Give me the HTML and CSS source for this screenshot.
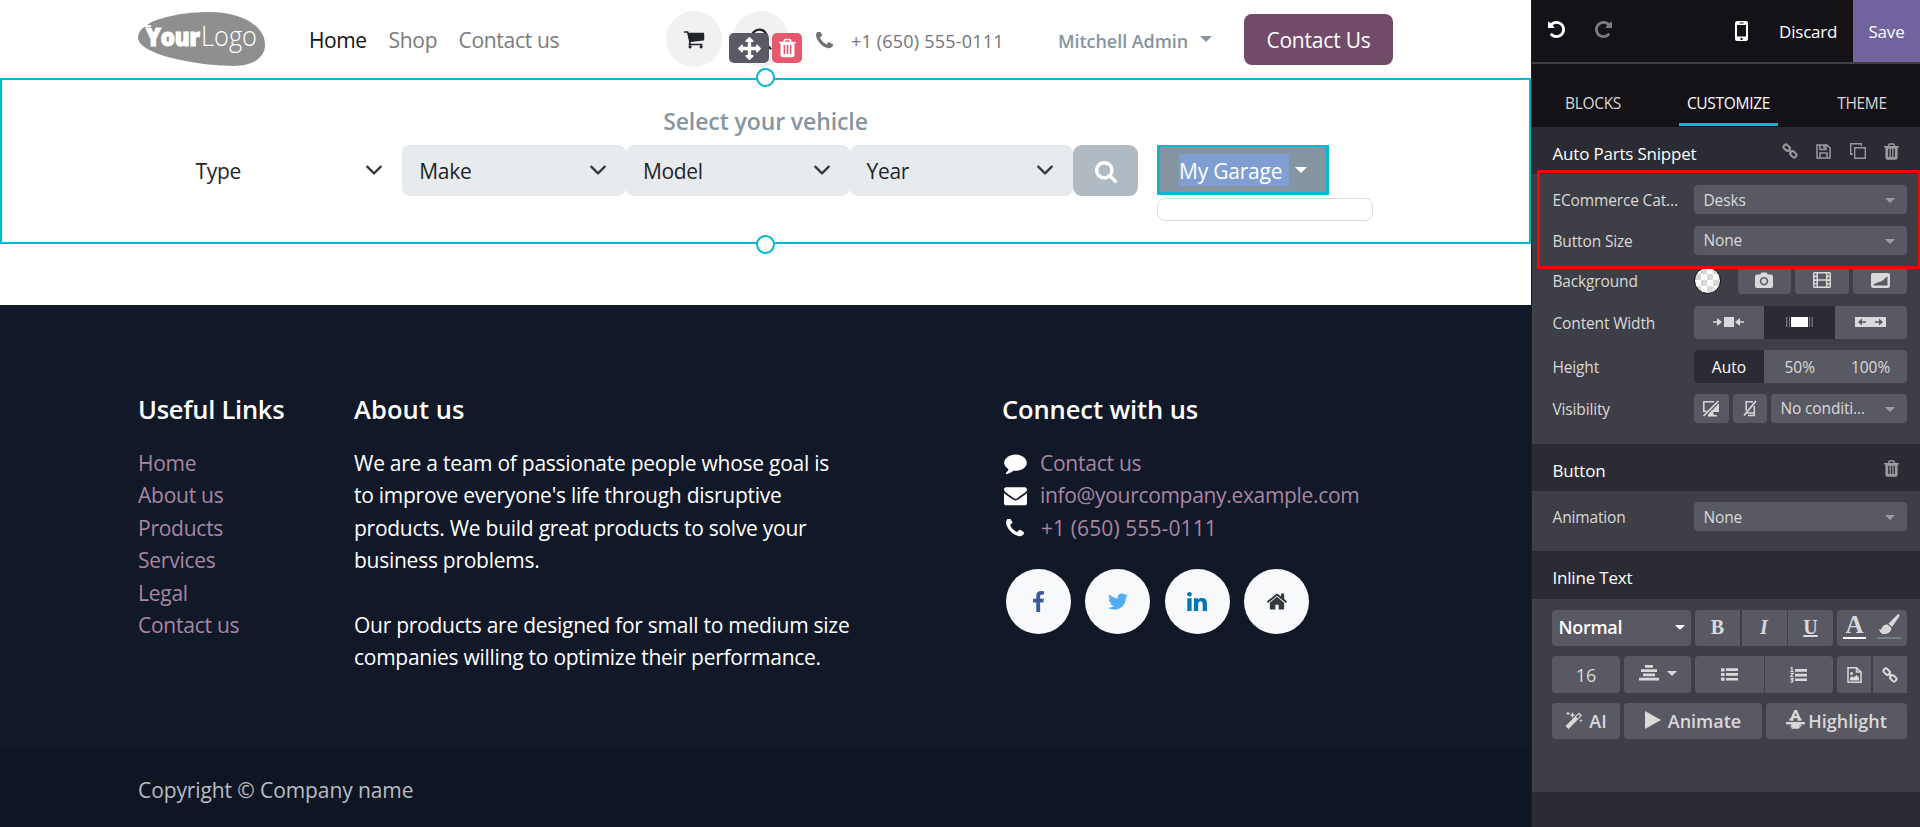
FILE: index.html
```
<!DOCTYPE html>
<html lang="en">
<head>
<meta charset="utf-8">
<title>Website editor</title>
<link rel="stylesheet" href="styles.css">
</head>
<body>
<svg class="defs" width="0" height="0">
  <symbol id="cart" viewBox="0 0 1792 1792"><path d="M704 1536q0 52-38 90t-90 38-90-38-38-90 38-90 90-38 90 38 38 90zm896 0q0 52-38 90t-90 38-90-38-38-90 38-90 90-38 90 38 38 90zm128-1088v512q0 24-16.5 42.5t-40.5 21.5l-1044 122q13 60 13 70 0 16-24 64h920q26 0 45 19t19 45-19 45-45 19h-1024q-26 0-45-19t-19-45q0-11 8-31.5t16-36 21.5-40 15.5-29.5l-177-823h-204q-26 0-45-19t-19-45 19-45 45-19h256q16 0 28.5 6.5t19.5 15.5 13 24.5 8 26 5.5 29.5 4.5 26h1201q26 0 45 19t19 45z"/></symbol>
  <symbol id="phone" viewBox="192 256 1408 1408"><path transform="translate(0 64)" d="M1600 1240q0 27-10 70.5t-21 68.5q-21 50-122 106-94 51-186 51-27 0-53-3.5t-57.5-12.5-47-14.5-55.5-20.5-49-18q-98-35-175-83-127-79-264-216t-216-264q-48-77-83-175-3-9-18-49t-20.5-55.5-14.5-47-12.5-57.5-3.5-53q0-92 51-186 56-101 106-122 25-11 68.5-21t70.5-10q14 0 21 3 18 6 53 76 11 19 30 54t35 63.5 31 53.5q3 4 17.5 25t21.5 35.5 7 28.5q0 20-28.5 50t-62 55-62 53-28.5 46q0 9 5 22.5t8.5 20.5 14 24 11.5 19q76 137 174 235t235 174q2 1 19 11.5t24 14 20.5 8.5 22.5 5q18 0 46-28.5t53-62 55-62 50-28.5q14 0 28.5 7t35.5 21.5 25 17.5q25 15 53.5 31t63.5 35 54 30q70 35 76 53 3 7 3 21z"/></symbol>
  <symbol id="search" viewBox="64 128 1664 1664"><path d="M1216 832q0-185-131.5-316.5t-316.5-131.5-316.5 131.5-131.5 316.5 131.5 316.5 316.5 131.5 316.5-131.5 131.5-316.5zm512 832q0 52-38 90t-90 38q-54 0-90-38l-343-342q-179 124-399 124-143 0-273.5-55.5t-225-150-150-225-55.5-273.5 55.5-273.5 150-225 225-150 273.5-55.5 273.5 55.5 225 150 150 225 55.5 273.5q0 220-124 399l343 343q37 37 37 90z"/></symbol>
  <symbol id="trash" viewBox="192 128 1408 1536"><path fill-rule="evenodd" d="M704 1376v-704q0-14-9-23t-23-9h-64q-14 0-23 9t-9 23v704q0 14 9 23t23 9h64q14 0 23-9t9-23zm256 0v-704q0-14-9-23t-23-9h-64q-14 0-23 9t-9 23v704q0 14 9 23t23 9h64q14 0 23-9t9-23zm256 0v-704q0-14-9-23t-23-9h-64q-14 0-23 9t-9 23v704q0 14 9 23t23 9h64q14 0 23-9t9-23zm-544-992h448l-48-117q-7-9-17-11h-317q-10 2-17 11zm928 32v64q0 14-9 23t-23 9h-96v948q0 83-47 143.5t-113 60.5h-832q-66 0-113-58.5t-47-141.5v-952h-96q-14 0-23-9t-9-23v-64q0-14 9-23t23-9h309l70-167q15-37 54-63t79-26h320q40 0 79 26t54 63l70 167h309q14 0 23 9t9 23z"/></symbol>
  <symbol id="move" viewBox="0 0 1792 1792"><path d="M1792 896q0 26-19 45l-256 256q-19 19-45 19t-45-19-19-45v-128h-384v384h128q26 0 45 19t19 45-19 45l-256 256q-19 19-45 19t-45-19l-256-256q-19-19-19-45t19-45 45-19h128v-384h-384v128q0 26-19 45t-45 19-45-19l-256-256q-19-19-19-45t19-45l256-256q19-19 45-19t45 19 19 45v128h384v-384h-128q-26 0-45-19t-19-45 19-45l256-256q19-19 45-19t45 19l256 256q19 19 19 45t-19 45-45 19h-128v384h384v-128q0-26 19-45t45-19 45 19l256 256q19 19 19 45z"/></symbol>
  <symbol id="undo" viewBox="128 128 1536 1536"><path d="M1664 896q0 156-61 298t-164 245-245 164-298 61q-172 0-327-72.5t-264-204.5q-7-10-6.5-22.5t8.5-20.5l137-138q10-9 25-9 16 2 23 12 73 95 179 147t225 52q104 0 198.5-40.5t163.5-109.5 109.5-163.5 40.5-198.5-40.5-198.5-109.5-163.5-163.5-109.5-198.5-40.5q-98 0-188 35.5t-160 101.5l137 138q31 30 14 69-17 40-59 40h-448q-26 0-45-19t-19-45v-448q0-42 40-59 39-17 69 14l130 129q107-101 244.5-156.5t284.5-55.5q156 0 298 61t245 164 164 245 61 298z"/></symbol>
  <symbol id="comment" viewBox="0 128 1792 1664"><path d="M1792 896q0 174-120 321.5t-326 233-450 85.5q-70 0-145-8-198 175-460 242-49 14-114 22-17 2-30.5-9t-17.5-29v-1q-3-4-.5-12t2-10 4.5-9.5l6-9 7-8.5 8-9q7-8 31-34.5t34.5-38 31-39.5 32.5-51 27-59 26-76q-157-89-247.5-220t-90.5-281q0-130 71-248.5t191-204.5 286-136.5 348-50.5q244 0 450 85.5t326 233 120 321.5z"/></symbol>
  <symbol id="envelope" viewBox="0 0 1792 1792"><path d="M1792 710v794q0 66-47 113t-113 47h-1472q-66 0-113-47t-47-113v-794q44 49 101 87 362 246 497 345 57 42 92.5 65.5t94.5 48 110 24.5h2q51 0 110-24.5t94.5-48 92.5-65.5q170-123 498-345 57-39 100-87zm0-294q0 79-49 151t-122 123q-376 261-468 325-10 7-42.5 31t-54 38-52 32.5-57.5 27-50 9h-2q-23 0-50-9t-57.5-27-52-32.5-54-38-42.5-31q-91-64-262-182.5t-205-142.5q-62-42-117-115.5t-55-136.5q0-78 41.5-130t118.5-52h1472q65 0 112.5 47t47.5 113z"/></symbol>
  <symbol id="facebook" viewBox="479 0 864 1664"><path d="M1343 12v264h-157q-86 0-116 36t-30 108v189h293l-39 296h-254v759h-306v-759h-255v-296h255v-218q0-186 104-288.5t277-102.5q147 0 228 12z"/></symbol>
  <symbol id="twitter" viewBox="108 256 1576 1280"><path d="M1684 408q-67 98-162 167 1 14 1 42 0 130-38 259.5t-115.5 248.5-184.5 210.5-258 146-323 54.5q-271 0-496-145 35 4 78 4 225 0 401-138-105-2-188-64.5t-114-159.5q33 5 61 5 43 0 85-11-112-23-185.5-111.5t-73.5-205.5v-4q68 38 146 41-66-44-105-115t-39-154q0-88 44-163 121 149 294.5 238.5t371.5 99.5q-8-38-8-74 0-134 94.5-228.5t228.5-94.5q140 0 236 102 109-21 205-78-37 115-142 178 93-10 186-50z"/></symbol>
  <symbol id="linkedin" viewBox="128 148 1536 1468"><path d="M477 625v991h-330v-991h330zm21-306q1 73-50.5 122t-135.5 49h-2q-82 0-132-49t-50-122q0-74 51.5-122.5t134.5-48.5 133 48.5 51 122.5zm1166 729v568h-329v-530q0-105-40.5-164.5t-126.5-59.5q-63 0-105.5 34.5t-63.5 85.5q-11 30-11 81v553h-329q2-399 2-647t-1-296l-1-48h329v144h-2q20-32 41-56t56.5-52 87-43.5 114.5-15.5q171 0 275 113.5t104 332.5z"/></symbol>
  <symbol id="home" viewBox="90 250 1612 1286"><path d="M1472 992v480q0 26-19 45t-45 19h-384v-384h-256v384h-384q-26 0-45-19t-19-45v-480q0-1 .5-3t.5-3l575-474 575 474q1 2 1 6zm223-69l-62 74q-8 9-21 11h-3q-13 0-21-7l-692-577-692 577q-12 8-24 7-13-2-21-11l-62-74q-8-10-7-23.5t11-21.5l719-599q32-26 76-26t76 26l244 204v-195q0-14 9-23t23-9h192q14 0 23 9t9 23v408l219 182q10 8 11 21.5t-7 23.5z"/></symbol>
  <symbol id="chain" viewBox="0 0 16 16"><g fill="none" stroke="currentColor" stroke-width="2"><rect x="-3.4" y="-2.3" width="6.8" height="4.6" rx="2.1" transform="translate(4.7 4.7) rotate(45)"/><rect x="-3.4" y="-2.3" width="6.8" height="4.6" rx="2.1" transform="translate(11.3 11.3) rotate(45)"/><path d="M6.2 6.2l3.6 3.6"/></g></symbol>
  <symbol id="floppy" viewBox="0 0 15 15"><path fill="none" stroke="currentColor" stroke-width="1.500" d="M1 1h10l3 3v10H1zM4 14V9h7v5M4 1v4.500h6V1"/><path d="M7.200 1.500h2v3h-2z"/></symbol>
  <symbol id="clone" viewBox="0 0 16 16"><path fill="none" stroke="currentColor" stroke-width="1.400" d="M4.700 4.700h10.600v10.600H4.700zM3 11.300H.7V.7h10.600V3"/></symbol>
  <symbol id="chev" viewBox="0 0 16 16"><path fill="none" stroke="#343a40" stroke-width="2" stroke-linecap="round" stroke-linejoin="round" d="m2 5 6 6 6-6"/></symbol>
</svg>
<div class="app">
<main class="site">
  <header class="header">
    <svg class="logo" viewBox="0 0 127 54">
      <path fill="#8f8f8f" d="M0 25C1 8 40 0 72 0c30 0 55 13 55 33 0 13-13 21-31 21C60 54-1 43 0 25z"/>
      <path fill="#fff" d="M5 13h8v2H5z"/>
      <text class="logo-bold" x="8" y="33.500" textLength="54" lengthAdjust="spacingAndGlyphs">Your</text>
      <text class="logo-light" x="63" y="33.500" textLength="56" lengthAdjust="spacingAndGlyphs">Logo</text>
    </svg>
    <nav class="nav"><a class="nav-home">Home</a><a class="nav-shop">Shop</a><a class="nav-contact">Contact us</a></nav>
    <span class="round"><svg width="22" height="22"><use href="#cart"/></svg></span>
    <span class="round round-search"><svg width="22" height="22" viewBox="0 0 22 22"><path fill="none" stroke="#212529" stroke-width="2.300" stroke-linecap="round" d="M15 15l5.500 5.500M17 9.300a7.700 7.700 0 1 1-15.400 0a7.700 7.700 0 0 1 15.400 0"/></svg></span>
    <svg class="head-phone" width="17" height="17"><use href="#phone"/></svg>
    <span class="head-number">+1 (650) 555-0111</span>
    <span class="user">Mitchell Admin</span><i class="caret user-caret"></i>
    <a class="cta">Contact Us</a>
  </header>
  <section class="vehicle">
    <span class="knob knob-top"></span><span class="knob knob-bottom"></span>
    <div class="overlay-tools">
      <span class="tool-move"><svg width="23" height="23"><use href="#move"/></svg></span>
      <span class="tool-trash"><svg width="17" height="20"><use href="#trash"/></svg></span>
    </div>
    <h4 class="vehicle-title">Select your vehicle</h4>
    <div class="vehicle-form">
      <div class="pick pick-plain">Type<svg width="18" height="18"><use href="#chev"/></svg></div>
      <div class="pick">Make<svg width="18" height="18"><use href="#chev"/></svg></div>
      <div class="pick">Model<svg width="18" height="18"><use href="#chev"/></svg></div>
      <div class="pick">Year<svg width="18" height="18"><use href="#chev"/></svg></div>
      <div class="find"><svg width="22" height="22"><use href="#search"/></svg></div>
      <div class="garage"><div class="garage-btn"><span class="selected">My Garage</span><i class="caret"></i></div><div class="garage-menu"></div></div>
    </div>
  </section>
  <footer class="footer">
    <div class="col-links"><h5>Useful Links</h5>
      <ul><li>Home</li><li>About us</li><li>Products</li><li>Services</li><li>Legal</li><li>Contact us</li></ul></div>
    <div class="col-about"><h5>About us</h5>
      <p>We are a team of passionate people whose goal is<br>to improve everyone's life through disruptive<br>products. We build great products to solve your<br>business problems.</p>
      <p>Our products are designed for small to medium size<br>companies willing to optimize their performance.</p></div>
    <div class="col-connect"><h5>Connect with us</h5>
      <ul class="contacts">
        <li><i><svg width="23" height="21"><use href="#comment"/></svg></i>Contact us</li>
        <li><i><svg width="23" height="23"><use href="#envelope"/></svg></i><span class="mail">info@yourcompany.example.com</span></li>
        <li><i><svg width="18" height="18"><use href="#phone"/></svg></i><span class="tel">+1 (650) 555-0111</span></li>
      </ul>
      <div class="social">
        <span class="fb"><svg width="11" height="21"><use href="#facebook"/></svg></span>
        <span class="tw"><svg width="20" height="17"><use href="#twitter"/></svg></span>
        <span class="li"><svg width="20" height="19"><use href="#linkedin"/></svg></span>
        <span class="ho"><svg width="20" height="17"><use href="#home"/></svg></span>
      </div></div>
  </footer>
  <div class="copyright">Copyright © Company name</div>
</main>
<aside class="panel">
  <div class="topbar">
    <svg class="undo" width="17" height="17"><use href="#undo"/></svg>
    <svg class="redo" width="17" height="17"><use href="#undo"/></svg>
    <svg class="mobile" width="13" height="21" viewBox="0 0 13 21"><path fill="#fff" fill-rule="evenodd" d="M2 0h9a2 2 0 0 1 2 2v16a2 2 0 0 1-2 2H2a2 2 0 0 1-2-2V2a2 2 0 0 1 2-2zM2 4v11.500h9V4zM4.500 1.600v.8h4v-.8zM6.500 16.700a1.200 1.200 0 1 0 .01 0z"/></svg>
    <span class="discard">Discard</span><span class="save">Save</span>
  </div>
  <div class="tabs"><span class="tab tab-blocks">BLOCKS</span><span class="tab tab-custom">CUSTOMIZE</span><span class="tab tab-theme">THEME</span></div>
  <div class="band band-first"><span>Auto Parts Snippet</span><div class="band-icons"><svg width="16" height="16"><use href="#chain"/></svg><svg width="15" height="15"><use href="#floppy"/></svg><svg width="16" height="16"><use href="#clone"/></svg><svg width="15" height="17"><use href="#trash"/></svg></div></div>
  <div class="options">
    <div class="highlight-box"></div>
    <div class="row"><label>ECommerce Cat...</label><div class="sel">Desks<i class="caret"></i></div></div>
    <div class="row"><label>Button Size</label><div class="sel">None<i class="caret"></i></div></div>
    <div class="row row-bg"><label>Background</label><span class="swatch"></span>
      <div class="trio">
      <span class="btn"><svg width="18" height="16" viewBox="0 0 18 16"><path fill-rule="evenodd" d="M2 2.500h3L6.500.5h5l1.500 2h3a2 2 0 0 1 2 2V14a2 2 0 0 1-2 2H2a2 2 0 0 1-2-2V4.500a2 2 0 0 1 2-2zM9 5a4.200 4.200 0 1 0 .01 0zM9 6.500a2.700 2.700 0 1 1-.01 0z"/></svg></span>
      <span class="btn"><svg width="18" height="16" viewBox="0 0 18 16"><path fill-rule="evenodd" d="M1.500 0h15A1.500 1.500 0 0 1 18 1.500v13a1.500 1.500 0 0 1-1.500 1.500h-15A1.500 1.500 0 0 1 0 14.500v-13A1.500 1.500 0 0 1 1.500 0zM1.500 1.500v2h2v-2zm0 3.700v2h2v-2zm0 3.700v2h2v-2zm0 3.600v2h2v-2zM14.500 1.500v2h2v-2zm0 3.700v2h2v-2zm0 3.700v2h2v-2zm0 3.600v2h2v-2zM5 1.500v5.700h8V1.500zM5 8.800v5.700h8V8.800z"/></svg></span>
      <span class="btn"><svg width="19" height="15" viewBox="0 0 19 15"><path fill-rule="evenodd" d="M2 0h15a2 2 0 0 1 2 2v11a2 2 0 0 1-2 2H2a2 2 0 0 1-2-2V2a2 2 0 0 1 2-2zM2.500 12.500h14V3.500C14.500 4 13 7.500 10 8.500c-3 .5-5 1.500-7.500 3z"/></svg></span>
      </div></div>
    <div class="row"><label>Content Width</label><div class="seg">
      <span><svg width="31" height="10" viewBox="0 0 31 10"><path d="M11 0h10v10H11zM0 4.200h4V1l5 4-5 4V5.800H0zM31 4.200h-4V1l-5 4 5 4V5.800h4z"/></svg></span>
      <span class="on"><svg width="27" height="10" viewBox="0 0 27 10"><path fill="#fff" d="M5 0h17v10H5z"/><path fill="#777780" d="M0 0h1.300v10H0zM3 0h1v10H3zM23 0h1v10h-1zM25.500 0h1.300v10h-1.300z"/></svg></span>
      <span><svg width="31" height="10" viewBox="0 0 31 10"><path d="M0 0h31v10H0z"/><path fill="#595964" d="M11 4.300H7V1.500L3 5l4 3.500V5.700h4zM20 4.300h4V1.500L28 5l-4 3.500V5.700h-4z"/></svg></span></div></div>
    <div class="row"><label>Height</label><div class="seg"><span class="on">Auto</span><span>50%</span><span>100%</span></div></div>
    <div class="row row-vis"><label>Visibility</label>
      <span class="btn btn-a"><svg width="18" height="17" viewBox="0 0 18 17"><path fill="none" stroke="#d9d9d9" stroke-width="1.500" d="M12 1.800H1.800v9.400h3M16.200 4v7.200H9"/><path d="M8 12h3l1 3h3v1.500H6V15zM9 11.500L16.500 4v8z"/><path stroke="#d9d9d9" stroke-width="1.700" d="M1.500 16L16.500 1"/></svg></span>
      <span class="btn btn-b"><svg width="14" height="17" viewBox="0 0 14 17"><path fill="none" stroke="#d9d9d9" stroke-width="1.500" d="M10 1.700H3.200v9M11.300 6v9.500H5M4 13h7"/><path stroke="#d9d9d9" stroke-width="1.700" d="M1 15.500L13 1"/></svg></span>
      <div class="sel">No conditi...<i class="caret"></i></div></div>
  </div>
  <div class="band"><span>Button</span><div class="band-icons"><svg width="15" height="17"><use href="#trash"/></svg></div></div>
  <div class="options options-anim"><div class="row"><label>Animation</label><div class="sel">None<i class="caret"></i></div></div></div>
  <div class="band"><span>Inline Text</span></div>
  <div class="editor">
    <div class="line line1">
      <span class="btn normal">Normal<i class="caret"></i></span>
      <div class="biu"><span class="btn">B</span><span class="btn ital">I</span><span class="btn und">U</span></div>
      <span class="btn colors"><b class="fore">A</b><b class="back"><svg width="21" height="20" viewBox="0 0 21 20"><path d="M18.500.500c2-1 2.500.500 1.500 2.500l-7 10-3.600-3.200zM8.500 10.500l3.800 3.400c0 4-3.500 6-7.300 6-3 0-4.500-2.500-5-5 1.500 1 2.500.6 3-.9.700-2.500 3-3.800 5.500-3.500z"/></svg></b></span>
    </div>
    <div class="line line2">
      <span class="btn size">16</span>
      <span class="btn align"><svg width="20" height="16" viewBox="0 0 20 16"><path d="M6 0h8v2.800H6zM2 4.200h16V7H2zM4 8.500h12v2.800H4zM0 12.800h20v2.800H0z"/></svg><i class="caret"></i></span>
      <div class="lists"><span class="btn"><svg width="17" height="13" viewBox="0 0 17 13"><path d="M5 .300H17V3H5zM5 5.100H17v2.700H5zM5 9.900H17v2.700H5zM0 .2h3.600v3.200H0zM0 4.900h3.600v3.200H0zM0 9.600h3.600v3.200H0z"/></svg></span>
      <span class="btn"><svg width="17" height="16" viewBox="0 0 17 16"><path d="M5 2H17v2.700H5zM5 6.700H17v2.700H5zM5 11.400H17v2.700H5z"/><path fill="none" stroke="#d9d9d9" stroke-width="1.200" d="M.5 1.300L2 .6v3.700M.3 4.400h3.200M.5 6.300h2.800L.6 9.500h3M.5 11.600h2.700L1.800 13c2 0 1.600 2.500-1.400 2"/></svg></span></div>
      <div class="media"><span class="btn"><svg width="15" height="16" viewBox="0 0 15 16"><path fill="none" stroke="#d9d9d9" stroke-width="1.500" d="M1 .8h8.500L14 5v10.200H1zM9.500.8V5H14"/><path d="M3 13.500V11l2-2 1.500 1.500L9.500 8l2.500 2.500v3z"/><circle cx="4.600" cy="6.500" r="1.500"/></svg></span><span class="btn btn-link"><svg width="16" height="16"><use href="#chain"/></svg></span></div>
    </div>
    <div class="line line3">
      <span class="btn ai"><svg width="18" height="18" viewBox="0 0 18 18"><path fill-rule="evenodd" d="M14 1.500L17 4.500 3.500 18 .5 15zM13.800 3.200L11 6l1.500 1.500 2.800-2.800zM3 0l.6 1.800 1.800.6-1.800.6L3 4.800l-.6-1.800L.6 2.400l1.800-.6zM7.500 1l.8 2.300 2.300.8-2.300.8-.8 2.300-.8-2.300L4.400 4.100l2.300-.8zM16 8l.5 1.300 1.300.5-1.300.5L16 11.600l-.5-1.300-1.300-.5 1.300-.5z"/></svg>AI</span>
      <span class="btn anim"><svg width="16" height="18" viewBox="0 0 16 18"><path d="M0 0l16 9-16 9z"/></svg>Animate</span>
      <span class="btn high"><svg width="19" height="19" viewBox="0 0 19 19"><path fill="none" stroke="#d9d9d9" stroke-width="2.300" d="M5.200 10L9.200 1h1L14 10M6.500 7h6.500M3.500 9.600h4M11.500 9.600h4"/><path d="M0 12h19v2.200l-6 .2 3 .8-1 1.200h-2l1 1.400-1.500 1H6l-1.500-1.300h3l-3.500-1 2-2-6-.3z"/></svg>Highlight</span>
    </div>
  </div>
</aside>
</div>
</body>
</html>
```
FILE: styles.css
```
* { box-sizing: border-box; }
body { margin: 0; font-family: "Open Sans", "Noto Sans", sans-serif; background: #fff; }
.defs { position: absolute; }
svg { fill: currentColor; flex: none; display: block; }
h4, h5, p, ul { margin: 0; padding: 0; list-style: none; }
.app { display: flex; width: 1920px; height: 827px; overflow: hidden; white-space: nowrap; }
.caret { flex: none; width: 0; height: 0; border: 5px solid transparent; border-top-color: currentColor; border-bottom: 0; }

.site { width: 1531px; flex: none; display: flex; flex-direction: column; font-size: 21px; color: #212529; }
.header { height: 78px; display: flex; align-items: center; padding-left: 138px; }
.logo { width: 127px; height: 54px; }
.logo-bold { font: 800 24px "Open Sans"; fill: #fff; stroke: #fff; stroke-width: 1.2; }
.logo-light { font: 300 27px "Open Sans"; fill: #fff; }
.nav { display: flex; margin-left: 44px; width: 357px; color: #7a7b7d; letter-spacing: -.3px; padding-top: 2px; }
.nav-home { width: 79.500px; color: #111; letter-spacing: -.4px; }
.nav-shop { width: 70px; }
.round { width: 56px; height: 56px; border-radius: 50%; background: #f1f1f1; display: grid; place-items: center; }
.round-search { margin-left: 11px; }
.head-phone { margin: 2px 0 0 27px; color: #6f7072; }
.head-number { margin-left: 18px; width: 207px; font-size: 18px; color: #737476; padding-top: 4px; letter-spacing: .2px; }
.user { width: 142px; font-size: 18px; font-weight: 600; color: #8595a2; letter-spacing: -.05px; padding-top: 4px; }
.user-caret { color: #8595a2; border-width: 6px 6px 0; width: 12px; }
.cta { margin-left: 32px; width: 149px; height: 51px; border-radius: 8px; background: #714b67; color: #fff; display: grid; place-items: center; letter-spacing: -.2px; padding-top: 1px; }

.vehicle { position: relative; height: 166px; border: 2px solid #01bad2; padding: 28px 0 0 176.500px; flex: none; }
.knob { position: absolute; left: 754px; width: 19px; height: 19px; border: 2px solid #01bad2; border-radius: 50%; background: #fff; }
.knob-top { top: -12px; }
.knob-bottom { bottom: -12px; }
.overlay-tools { position: absolute; left: 727px; top: -47px; display: flex; gap: 3px; color: #fff; }
.tool-move, .tool-trash { height: 30px; border-radius: 5px; display: grid; place-items: center; }
.tool-move { width: 40px; background: #5a5a66; }
.tool-trash { width: 30px; background: #e6586c; }
.vehicle-title { margin-left: -176.500px; text-align: center; font-size: 23px; line-height: 26px; font-weight: 600; color: #8595a2; letter-spacing: -.1px; margin-bottom: 11px; }
.vehicle-form { display: flex; }
.pick { width: 223.700px; height: 51px; border-radius: 8px; background: #e7ebee; padding: 1px 19px 0 17px; display: flex; align-items: center; justify-content: space-between; letter-spacing: -.3px; }
.pick svg { margin-top: -2px; }
.pick-plain { background: none; }
.find { width: 65px; height: 51px; border-radius: 9px; background: #b0bac3; color: #fff; display: grid; place-items: center; padding-top: 2px; }
.garage { margin-left: 18.700px; }
.garage-btn { width: 172px; height: 50px; border: 3px solid #01bad2; border-top-width: 2px; background: #8595a2; color: #fff; display: flex; align-items: center; gap: 6px; padding-left: 19px; }
.garage-btn .caret { border-width: 6px 6px 0; }
.selected { width: 110px; height: 32px; line-height: 34px; background: #7f9fd2; letter-spacing: -.2px; }
.garage-menu { width: 216px; height: 23px; margin-top: 3px; border: 1px solid #dadada; border-radius: 8px; }

.footer { margin-top: 61px; height: 442px; flex: none; background: #111827; color: #fff; padding: 85px 0 0 138px; display: flex; line-height: 32.400px; }
.footer h5 { font-size: 25.500px; line-height: 38px; font-weight: 600; margin-bottom: 19px; letter-spacing: -.25px; }
.footer .col-about h5 { letter-spacing: .1px; }
.footer .col-connect h5 { letter-spacing: -.1px; }
.col-links { width: 216px; }
.col-about { width: 648px; }
.col-about p { margin-bottom: 32.400px; letter-spacing: -.26px; }
.footer li { color: #a986a3; letter-spacing: -.25px; }
.contacts li { display: flex; align-items: center; }
.contacts i { width: 38px; padding-left: 2px; color: #fff; display: flex; }
.contacts li:last-child i { padding-left: 4px; }
.mail { letter-spacing: -.32px; }
.tel { padding-left: 1px; letter-spacing: .1px; }
.social { display: flex; gap: 14.400px; margin: 25px 0 0 4px; }
.social span { width: 65px; height: 65px; border-radius: 50%; background: #f8f9fa; display: grid; place-items: center; }
.fb { color: #3b5998; } .tw { color: #55acee; } .li { color: #0077b5; } .ho { color: #343a40; }
.copyright { flex: 1; background: #0f1623; color: #b9bcc1; padding: 27px 0 0 138px; line-height: 32px; letter-spacing: -.1px; }

.panel { width: 389px; flex: none; border-left: 1px solid #1d1d24; background: #2b2b33; color: #d9d9d9; font-size: 15.500px; display: flex; flex-direction: column; }
.topbar { height: 64px; flex: none; background: #141217; border-bottom: 2px solid #3e3e46; display: flex; padding-left: 16px; color: #fff; font-size: 17px; letter-spacing: -.2px; }
.undo { margin-top: 21px; }
.redo { margin: 21px 0 0 30px; transform: scaleX(-1); color: #7c7c80; }
.mobile { margin: 21px 0 0 123px; }
.discard { margin-left: 31px; width: 74px; line-height: 63px; }
.save { width: 67px; background: #71639e; line-height: 63px; text-align: center; }
.tabs { height: 63px; flex: none; background: #141217; display: flex; padding: 24px 0 0 11px; line-height: 31px; letter-spacing: -.3px; }
.tab { text-align: center; height: 38px; }
.tab-blocks { width: 100px; }
.tab-custom { width: 99px; margin-left: 36px; color: #fff; border-bottom: 3px solid #01bad2; }
.tab-theme { width: 90px; margin-left: 39px; }
.band { height: 47px; flex: none; background: #2b2b33; color: #fff; font-size: 17px; display: flex; align-items: center; justify-content: space-between; padding: 5px 21px 0 20.500px; letter-spacing: -.2px; }
.band-icons { display: flex; gap: 18.500px; align-items: center; color: #9a9a9e; margin-top: -4px; }
.options { position: relative; height: 270px; flex: none; background: #3e3e46; padding: 11px 13px 0 21px; display: flex; flex-direction: column; gap: 11.500px; }
.options-anim { height: 60px; }
.highlight-box { position: absolute; left: 5px; top: -4px; width: 384px; height: 99px; border: 3px solid #fe0000; border-radius: 2px; z-index: 2; }
.row { display: flex; align-items: center; height: 29px; }
.row:nth-child(5), .row:nth-child(6) { height: 33px; }
.row-bg { height: 28px; }
.row label { width: 141px; letter-spacing: -.15px; padding-top: 1px; margin-left: -.5px; }
.sel { flex: 1; height: 29px; border-radius: 4px; background: #595964; display: flex; align-items: center; justify-content: space-between; padding: 0 12px 0 10px; letter-spacing: -.15px; }
.sel .caret { color: #9c9ca2; margin-top: 2px; }
.btn { border-radius: 4px; background: #595964; color: #d9d9d9; display: flex; align-items: center; justify-content: center; }
.swatch { width: 27px; height: 27px; border-radius: 50%; border: 1px solid #111; margin-right: 17px; background: repeating-conic-gradient(#d8d8d8 0 25%, #fff 0 50%) 6px 6px / 12px 12px; }
.trio { flex: 1; display: grid; grid-template-columns: 1fr 1fr 1fr; gap: 4px; }
.trio .btn { height: 28px; }
.seg { flex: 1; height: 33px; display: grid; grid-template-columns: 1fr 1fr 1fr; border-radius: 4px; overflow: hidden; background: #595964; padding-right: 1px; }
.seg span { display: grid; place-items: center; }
.seg .on { background: #2b2b33; color: #fff; }
.row-vis { margin-top: -1px; }
.row-vis .btn { height: 29px; margin-right: 4px; }
.btn-a { width: 35px; } .btn-b { width: 34px; }

.editor { background: #3e3e46; height: 193px; margin-top: 0; flex: none; padding: 11px 13px 0 20px; }
.options-anim + .band { height: 48px; }
.line { display: flex; gap: 4px; margin-bottom: 10px; height: 36px; }
.line2 { height: 37px; }
.normal { width: 139px; color: #fff; font-weight: 600; font-size: 18px; justify-content: space-between; padding: 0 6px 2px 6.500px; letter-spacing: -.3px; }
.biu, .lists { width: 138px; display: grid; grid-template-columns: 1fr 1fr 1fr; gap: 1.500px; font: bold 20px "Liberation Serif", serif; border-radius: 4px; overflow: hidden; }
.biu .btn { padding-bottom: 2px; }
.biu .btn, .lists .btn, .media .btn { border-radius: 0; }
.ital { font-style: italic; } .und { text-decoration: underline; }
.colors { width: 70px; gap: 11px; padding: 5px 0 7px; align-items: stretch; }
.fore { width: 23px; border-bottom: 2px solid #fff; font: bold 25px/20px "Liberation Serif", serif; text-align: center; }
.back { width: 24px; border-bottom: 2px solid #6f7f87; padding-left: 2px; }
.back svg { margin-top: -1px; }
.size { width: 68px; font-size: 18px; }
.align { width: 67px; gap: 8px; padding-bottom: 3px; }
.lists { grid-template-columns: 1fr 1fr; gap: 1px; }
.media { width: 70px; display: grid; grid-template-columns: 1fr 1fr; gap: 2px; border-radius: 4px 0 0 4px; overflow: hidden; }
.line3 .btn { font-weight: 600; font-size: 18px; padding-bottom: 0; letter-spacing: 0; }
.line3 svg { margin-top: -3px; }
.ai { width: 68px; gap: 6px; } .anim { width: 138px; gap: 7px; } .high { width: 141px; gap: 3px; }
```
